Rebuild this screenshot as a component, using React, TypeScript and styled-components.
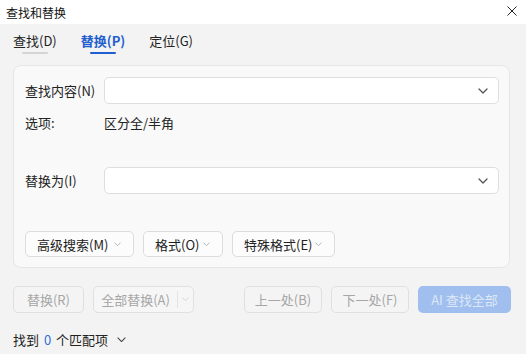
import React, {useState} from "react";
import styled, {createGlobalStyle} from "styled-components";

const GlobalStyle = createGlobalStyle`
  html, body {
    margin: 0;
    padding: 0;
    background: #f3f3f3;
  }
  body {
    font-family: "Noto Sans CJK SC", "Noto Sans", "Liberation Sans", sans-serif;
    font-size: 13px;
    color: #1f1f1f;
  }
`;

const Window = styled.div`
  width: 526px;
  height: 354px;
  display: flex;
  flex-direction: column;
  background: #f3f3f3;
  overflow: hidden;
`;

const TitleBar = styled.div`
  height: 24px;
  flex: none;
  background: #fff;
  display: flex;
  align-items: center;
  justify-content: space-between;
  padding: 0 9px 0 6px;
  font-size: 12px;
  color: #111;
`;

const CloseButton = styled.div`
  width: 10px;
  height: 10px;
  display: flex;
  margin-top: -3px;
`;

const Tabs = styled.div`
  display: flex;
  gap: 24px;
  padding: 8px 13px 0;
`;

const Tab = styled.div<{ $active?: boolean; $dim?: boolean }>`
  display: flex;
  flex-direction: column;
  align-items: center;
  line-height: 18px;
  font-weight: ${p => (p.$active ? 700 : 400)};
  color: ${p => (p.$active ? "#1f5fcf" : "#222")};
  cursor: default;

  &::after {
    content: "";
    width: 26px;
    height: 2px;
    margin-top: 2px;
    border-radius: 1px;
    background: ${p => (p.$active ? "#1f5fcf" : p.$dim ? "#d4d4d4" : "transparent")};
  }
`;

const Panel = styled.div`
  margin: 11px 16px 0 13px;
  height: 203px;
  box-sizing: border-box;
  background: #f9f9f9;
  border: 1px solid #e6e6e6;
  border-radius: 8px;
  padding: 11px 10px 0 11px;
  display: flex;
  flex-direction: column;
`;

const FieldRow = styled.div<{ $top?: number }>`
  display: grid;
  grid-template-columns: 79px 1fr;
  align-items: center;
  margin-top: ${p => p.$top || 0}px;
`;

const Label = styled.div`
  line-height: 18px;
  color: #222;
`;

const ComboBox = styled.div`
  height: 27px;
  box-sizing: border-box;
  background: #fff;
  border: 1px solid #dedede;
  border-radius: 5px;
  display: flex;
  align-items: center;
  justify-content: flex-end;
  padding-right: 10px;
`;

const OptionValue = styled.div`
  line-height: 18px;
  color: #222;
`;

const ToolRow = styled.div`
  display: flex;
  gap: 9px;
  margin-top: 37px;
`;

const MenuButton = styled.div<{ $w: number }>`
  width: ${p => p.$w}px;
  height: 26px;
  box-sizing: border-box;
  background: #fcfcfc;
  border: 1px solid #dcdcdc;
  border-radius: 5px;
  display: flex;
  align-items: center;
  justify-content: space-between;
  padding: 0 12px 0 11px;
  color: #222;
`;

const ActionBar = styled.div`
  display: flex;
  align-items: center;
  padding: 18px 15px 0 13px;
  gap: 9px;
`;

const Spacer = styled.div`
  flex: 1;
`;

const FlatButton = styled.div<{ $w: number }>`
  width: ${p => p.$w}px;
  height: 27px;
  box-sizing: border-box;
  background: #f4f4f4;
  border: 1px solid #e0e0e0;
  border-radius: 5px;
  display: flex;
  align-items: center;
  justify-content: center;
  color: #a6a6a6;
`;

const SplitButton = styled.div`
  width: 101px;
  height: 27px;
  box-sizing: border-box;
  background: #f6f6f6;
  border: 1px solid #e0e0e0;
  border-radius: 5px;
  display: flex;
  align-items: stretch;
  color: #a6a6a6;
`;

const SplitMain = styled.div`
  flex: 1;
  display: flex;
  align-items: center;
  justify-content: center;
  border-right: 1px solid #e4e4e4;
  margin: 4px 0;
`;

const SplitArrow = styled.div`
  width: 15px;
  display: flex;
  align-items: center;
  justify-content: center;
`;

const PrimaryButton = styled.div`
  width: 93px;
  height: 27px;
  box-sizing: border-box;
  background: #a0bfee;
  border-radius: 5px;
  display: flex;
  align-items: center;
  justify-content: center;
  color: #dce7f8;
`;

const Status = styled.div`
  display: flex;
  align-items: center;
  gap: 9px;
  padding: 18px 0 0 13px;
  line-height: 18px;
  color: #222;
`;

const Count = styled.span`
  color: #2f6fdc;
  margin: 0 2px;
`;

function Chevron({size = 10, color = "#555", width = 1.3}: { size?: number; color?: string; width?: number }) {
  return (
    <svg width={size} height={size / 2 + 1} viewBox="0 0 10 6" fill="none">
      <path d="M1 1l4 4 4-4" stroke={color} strokeWidth={width} strokeLinecap="round" strokeLinejoin="round" />
    </svg>
  );
}

export default function App() {
  const [tab, setTab] = useState("replace");

  return (
    <>
      <GlobalStyle />
      <Window>
        <TitleBar>
          <span>查找和替换</span>
          <CloseButton>
            <svg width="10" height="10" viewBox="0 0 10 10">
              <path d="M0.5 0.5l9 9M9.5 0.5l-9 9" stroke="#222" strokeWidth="1" />
            </svg>
          </CloseButton>
        </TitleBar>

        <Tabs>
          <Tab $dim={tab !== "find"} $active={tab === "find"} onClick={() => setTab("find")}>查找(D)</Tab>
          <Tab $active={tab === "replace"} onClick={() => setTab("replace")}>替换(P)</Tab>
          <Tab $active={tab === "goto"} onClick={() => setTab("goto")}>定位(G)</Tab>
        </Tabs>

        <Panel>
          <FieldRow>
            <Label>查找内容(N)</Label>
            <ComboBox><Chevron /></ComboBox>
          </FieldRow>
          <FieldRow $top={10}>
            <Label>选项:</Label>
            <OptionValue>区分全/半角</OptionValue>
          </FieldRow>
          <FieldRow $top={35}>
            <Label>替换为(I)</Label>
            <ComboBox><Chevron /></ComboBox>
          </FieldRow>
          <ToolRow>
            <MenuButton $w={109}>高级搜索(M)<Chevron size={7} color="#999" width={1} /></MenuButton>
            <MenuButton $w={80}>格式(O)<Chevron size={7} color="#999" width={1} /></MenuButton>
            <MenuButton $w={103}>特殊格式(E)<Chevron size={7} color="#999" width={1} /></MenuButton>
          </ToolRow>
        </Panel>

        <ActionBar>
          <FlatButton $w={71}>替换(R)</FlatButton>
          <SplitButton>
            <SplitMain>全部替换(A)</SplitMain>
            <SplitArrow><Chevron size={7} color="#c8c8c8" width={1} /></SplitArrow>
          </SplitButton>
          <Spacer />
          <FlatButton $w={78}>上一处(B)</FlatButton>
          <FlatButton $w={78}>下一处(F)</FlatButton>
          <PrimaryButton>AI 查找全部</PrimaryButton>
        </ActionBar>

        <Status>
          <span>找到 <Count>0</Count> 个匹配项</span>
          <Chevron size={9} color="#444" width={1.2} />
        </Status>
      </Window>
    </>
  );
}
